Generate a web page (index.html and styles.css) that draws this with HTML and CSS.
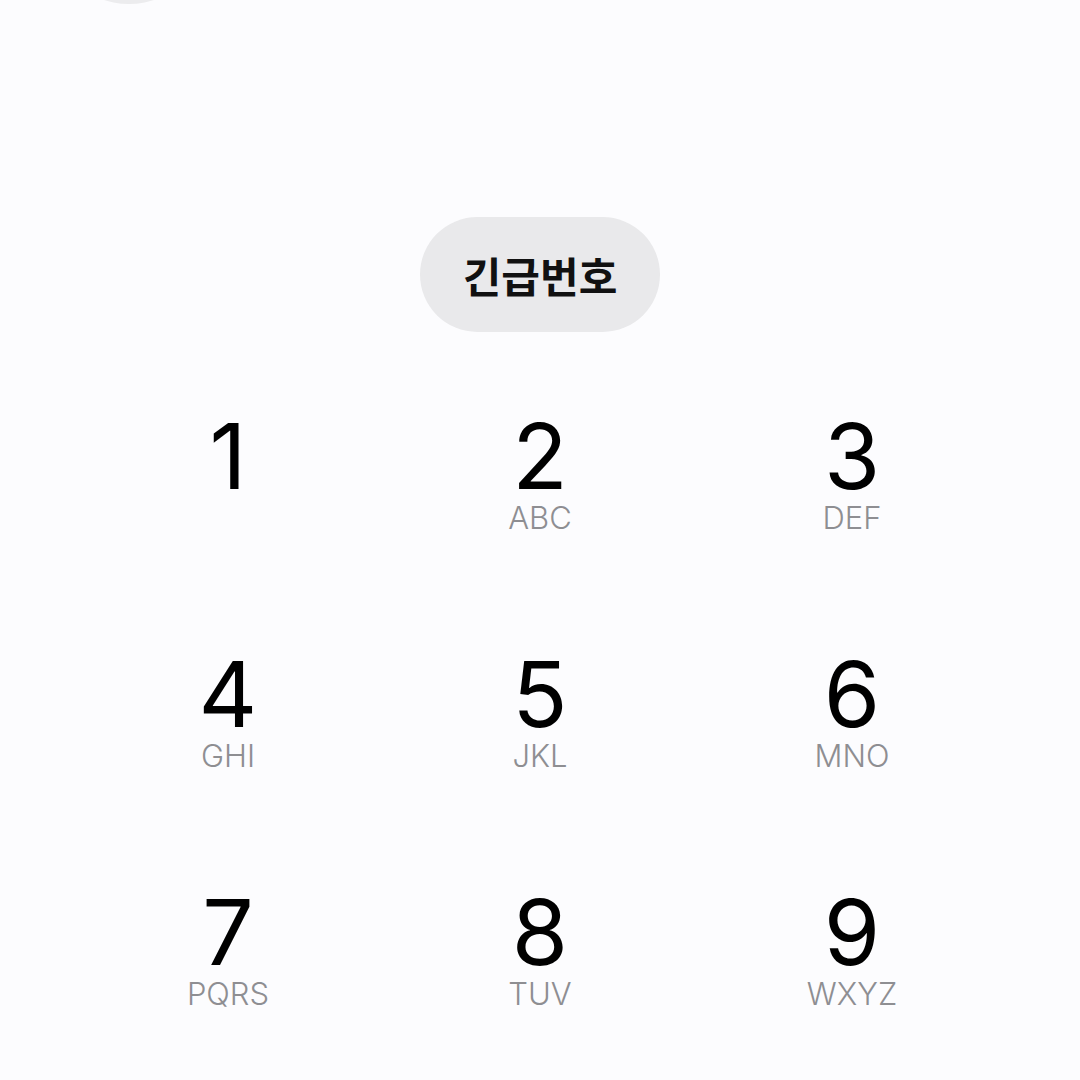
FILE: index.html
```html
<!DOCTYPE html>
<html lang="ko">
<head>
<meta charset="utf-8">
<title>Dialer</title>
<link rel="stylesheet" href="styles.css">
</head>
<body>
<div class="screen">
  <div class="top">
    <div class="avatar"></div>
  </div>
  <div class="emergency-row">
    <button class="emergency">긴급번호</button>
  </div>
  <div class="keypad">
    <div class="key"><span class="digit">1</span><span class="letters"></span></div>
    <div class="key"><span class="digit">2</span><span class="letters">ABC</span></div>
    <div class="key"><span class="digit">3</span><span class="letters">DEF</span></div>
    <div class="key"><span class="digit">4</span><span class="letters">GHI</span></div>
    <div class="key"><span class="digit">5</span><span class="letters">JKL</span></div>
    <div class="key"><span class="digit">6</span><span class="letters">MNO</span></div>
    <div class="key"><span class="digit">7</span><span class="letters">PQRS</span></div>
    <div class="key"><span class="digit">8</span><span class="letters">TUV</span></div>
    <div class="key"><span class="digit">9</span><span class="letters">WXYZ</span></div>
  </div>
</div>
</body>
</html>
```
FILE: styles.css
```css
html, body {
  margin: 0;
  padding: 0;
  background: #fcfcfe;
}
body {
  width: 1080px;
  height: 1080px;
  overflow: hidden;
  font-family: Inter, "Noto Sans CJK KR", sans-serif;
}
.screen {
  display: flex;
  flex-direction: column;
}
.top {
  height: 4px;
  display: flex;
}
.avatar {
  width: 160px;
  height: 160px;
  border-radius: 50%;
  background: #ececee;
  margin-top: -156px;
  margin-left: 49px;
  flex: none;
}
.emergency-row {
  display: flex;
  justify-content: center;
  margin-top: 213px;
}
.emergency {
  width: 240px;
  height: 115px;
  border: none;
  border-radius: 58px;
  background: #e9e9eb;
  color: #111;
  font-family: "Noto Sans CJK KR", sans-serif;
  font-weight: 700;
  font-size: 42px;
  padding: 0;
  display: flex;
  align-items: center;
  justify-content: center;
}
.keypad {
  display: grid;
  grid-template-columns: repeat(3, 312px);
  grid-auto-rows: 238px;
  padding: 0 72px;
  margin-top: 84px;
}
.key {
  display: flex;
  flex-direction: column;
  align-items: center;
}
.digit {
  font-family: Inter, sans-serif;
  font-weight: 400;
  font-size: 91px;
  line-height: 80px;
  height: 80px;
  color: #000;
}
.letters {
  font-family: Inter, sans-serif;
  font-weight: 300;
  font-size: 31px;
  line-height: 30px;
  height: 30px;
  margin-top: 7px;
  color: #8e8e92;
}
```
